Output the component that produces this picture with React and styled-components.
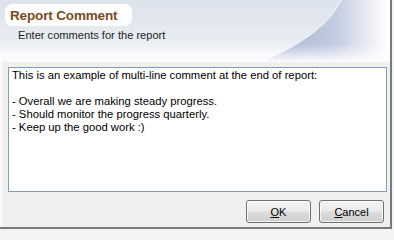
import React from "react";
import styled, { createGlobalStyle } from "styled-components";

const Global = createGlobalStyle`
  html, body { margin: 0; padding: 0; background: #f4f4f4; }
  #root { width: 394px; height: 230px; }
`;

const Window = styled.div`
  box-sizing: border-box;
  width: 392px;
  height: 229px;
  display: flex;
  flex-direction: column;
  background: #f0f0f0;
  border-right: 2px solid #7a7a7a;
  border-bottom: 2px solid #7a7a7a;
  box-shadow: inset 3px 0 0 -1px #fbfbfb;
  font-family: "Liberation Sans", Arial, sans-serif;
`;

const Header = styled.div`
  position: relative;
  height: 62px;
  flex: none;
  overflow: hidden;
  padding: 4px 0 0 5px;
  box-sizing: border-box;
`;

const HeaderArt = styled.svg`
  position: absolute;
  left: 0;
  top: 0;
  z-index: 0;
`;

const HeaderContent = styled.div`
  position: relative;
  z-index: 1;
  display: flex;
  flex-direction: column;
  align-items: flex-start;
`;

const TitlePill = styled.div`
  width: 127px;
  height: 22px;
  box-sizing: border-box;
  padding-left: 5px;
  display: flex;
  align-items: center;
  background: rgba(255, 255, 255, 0.95);
  border-radius: 7px;
`;

const Title = styled.span`
  font-weight: bold;
  font-size: 13.5px;
  color: #7a4a1e;
  letter-spacing: -0.15px;
`;

const Subtitle = styled.div`
  margin: 3px 0 0 13px;
  font-size: 11.1px;
  color: #1e1e1e;
`;

const Body = styled.div`
  flex: 1;
  display: flex;
  flex-direction: column;
  padding-top: 5px;
`;

const CommentBox = styled.div`
  box-sizing: border-box;
  margin-left: 8px;
  width: 379px;
  height: 125px;
  background: #fff;
  border: 1px solid #7f9db9;
  padding: 1px 3px;
  font-size: 11.25px;
  line-height: 13px;
  color: #000;
  white-space: pre-wrap;
`;

const Footer = styled.div`
  display: flex;
  justify-content: flex-end;
  gap: 8px;
  padding: 8px 6px 0 0;
`;

const Button = styled.button`
  box-sizing: border-box;
  width: 65px;
  height: 23px;
  padding: 0;
  border: 1px solid #707070;
  border-radius: 3px;
  background: linear-gradient(#f2f2f2 0%, #ebebeb 48%, #dddddd 52%, #cfcfcf 100%);
  box-shadow: inset 0 0 0 1px rgba(255, 255, 255, 0.75);
  font-family: "Liberation Sans", Arial, sans-serif;
  font-size: 11px;
  color: #000;
  cursor: default;
  u { text-decoration: underline; text-underline-offset: 1px; }
`;

const lines = `This is an example of multi-line comment at the end of report:

- Overall we are making steady progress.
- Should monitor the progress quarterly.
- Keep up the good work :)`;

export default function App() {
  return (
    <>
      <Global />
      <Window>
        <Header>
          <HeaderArt width="392" height="62" viewBox="0 0 392 62">
            <defs>
              <linearGradient id="bg" x1="0" y1="0" x2="0" y2="62" gradientUnits="userSpaceOnUse">
                <stop offset="0" stopColor="#dde3ec" />
                <stop offset="0.6" stopColor="#e7ebf2" />
                <stop offset="1" stopColor="#f7f8fa" />
              </linearGradient>
              <linearGradient id="sw" x1="290" y1="0" x2="388" y2="0" gradientUnits="userSpaceOnUse">
                <stop offset="0" stopColor="#b0bcd7" />
                <stop offset="0.45" stopColor="#c1cbe1" />
                <stop offset="1" stopColor="#ffffff" />
              </linearGradient>
              <linearGradient id="fade" x1="0" y1="44" x2="0" y2="62" gradientUnits="userSpaceOnUse">
                <stop offset="0" stopColor="#fbfcfd" stopOpacity="0" />
                <stop offset="1" stopColor="#fbfcfd" stopOpacity="1" />
              </linearGradient>
            </defs>
            <rect x="0" y="0" width="392" height="62" fill="url(#bg)" />
            <path d="M262 62 Q325 35 342 0 L392 0 L392 62 Z" fill="url(#sw)" />
            <path d="M262 62 Q325 35 342 0" fill="none" stroke="#f2f4f8" strokeWidth="1" transform="translate(-1 0)" />
            <rect x="0" y="0" width="392" height="62" fill="url(#fade)" />
          </HeaderArt>
          <HeaderContent>
            <TitlePill>
              <Title>Report Comment</Title>
            </TitlePill>
            <Subtitle>Enter comments for the report</Subtitle>
          </HeaderContent>
        </Header>
        <Body>
          <CommentBox>{lines}</CommentBox>
          <Footer>
            <Button><u>O</u>K</Button>
            <Button><u>C</u>ancel</Button>
          </Footer>
        </Body>
      </Window>
    </>
  );
}
